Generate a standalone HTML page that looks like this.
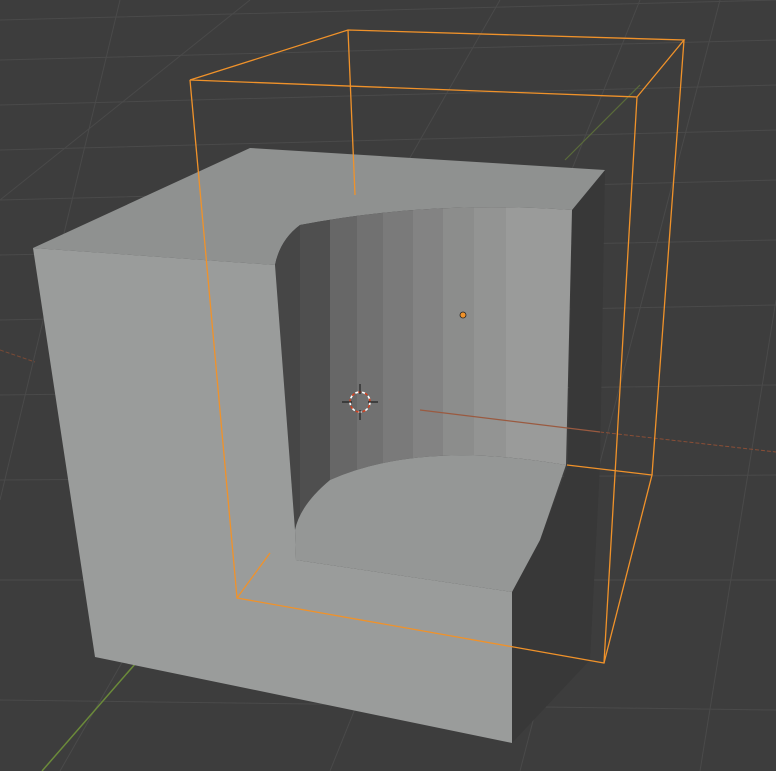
<!DOCTYPE html>
<html><head><style>html,body{margin:0;padding:0;background:#3d3d3d;overflow:hidden}svg{display:block}</style></head><body>
<svg width="776" height="771" viewBox="0 0 776 771" xmlns="http://www.w3.org/2000/svg">
<rect width="776" height="771" fill="#3d3d3d"/>
<g stroke="#4a4a4a" stroke-width="1" fill="none">
<path d="M0 20 L776 0 M0 60 L776 40 M0 105 L776 85 M0 150 L776 130 M0 200 L776 180 M0 255 L776 240 M0 320 L776 305 M0 395 L776 385 M0 480 L776 475 M0 580 L776 580 M0 700 L776 710"/>
<path d="M0 200 L250 0 M60 771 L500 0 M330 771 L640 0 M520 771 L720 0 M700 771 L776 300 M0 500 L120 0"/>
</g>
<path d="M42 771 L330 440" stroke="#6b8a3a" stroke-width="1.5"/>
<path d="M565 160 L640 85" stroke="#5a6b3a" stroke-width="1.2"/>
<path d="M0 350 L35 362" stroke="#7a4a35" stroke-width="1" stroke-dasharray="4 2"/>
<path d="M600 432 L776 452" stroke="#8a4e36" stroke-width="1" stroke-dasharray="4 2"/>
<polygon points="605,170 572,210 568,465 540,540 512,592 512,743 590,660 600,465" fill="#383838"/>
<path d="M33,248 L250,148 L605,170 L572,210 Q430,200 300,225 Q280,240 275,265 Z" fill="#8f9190"/>
<defs><clipPath id="w"><path d="M275,265 Q280,240 300,225 Q430,200 572,210 L566,465 Q420,440 330,480 Q300,505 295,530 Z"/></clipPath></defs>
<g clip-path="url(#w)">
<rect x="270" y="190" width="30" height="360" fill="#464646"/>
<rect x="300" y="190" width="30" height="360" fill="#4f4f4f"/>
<rect x="330" y="190" width="27" height="360" fill="#676767"/>
<rect x="357" y="190" width="26" height="360" fill="#717171"/>
<rect x="383" y="190" width="30" height="360" fill="#7a7a7a"/>
<rect x="413" y="190" width="30" height="360" fill="#838383"/>
<rect x="443" y="190" width="31" height="360" fill="#8c8d8c"/>
<rect x="474" y="190" width="32" height="360" fill="#939493"/>
<rect x="506" y="190" width="70" height="360" fill="#9a9b9a"/>
</g>
<path d="M295,530 Q300,505 330,480 Q420,440 566,465 L540,540 L512,592 L296,560 Z" fill="#959796"/>
<path d="M33,248 L275,265 L295,530 L296,560 L512,592 L512,743 L95,657 Z" fill="#9a9c9b"/>
<path d="M420,410 L600,432" stroke="#9a5a40" stroke-width="1.2"/>
<g stroke="#f0922a" stroke-width="1.3" fill="none">
<path d="M190,80 L637,97 L684,40 L348,30 Z"/>
<path d="M190,80 L237,598 L604,663 L652,475 L567,465"/>
<path d="M637,97 L604,663 M684,40 L652,475 M348,30 L355,195 M237,598 L270,553"/>
</g>
<circle cx="463" cy="315" r="3" fill="#f0922a" stroke="#222" stroke-width="0.8"/>
<g>
<circle cx="360" cy="402" r="10" fill="none" stroke="#fff" stroke-width="1.6" stroke-dasharray="4 3"/>
<circle cx="360" cy="402" r="10" fill="none" stroke="#d04020" stroke-width="1.6" stroke-dasharray="3 4" stroke-dashoffset="4"/>
<path d="M342 402 L352 402 M368 402 L378 402 M360 384 L360 394 M360 410 L360 420" stroke="#222" stroke-width="1.2"/>
</g>
</svg>
</body></html>
